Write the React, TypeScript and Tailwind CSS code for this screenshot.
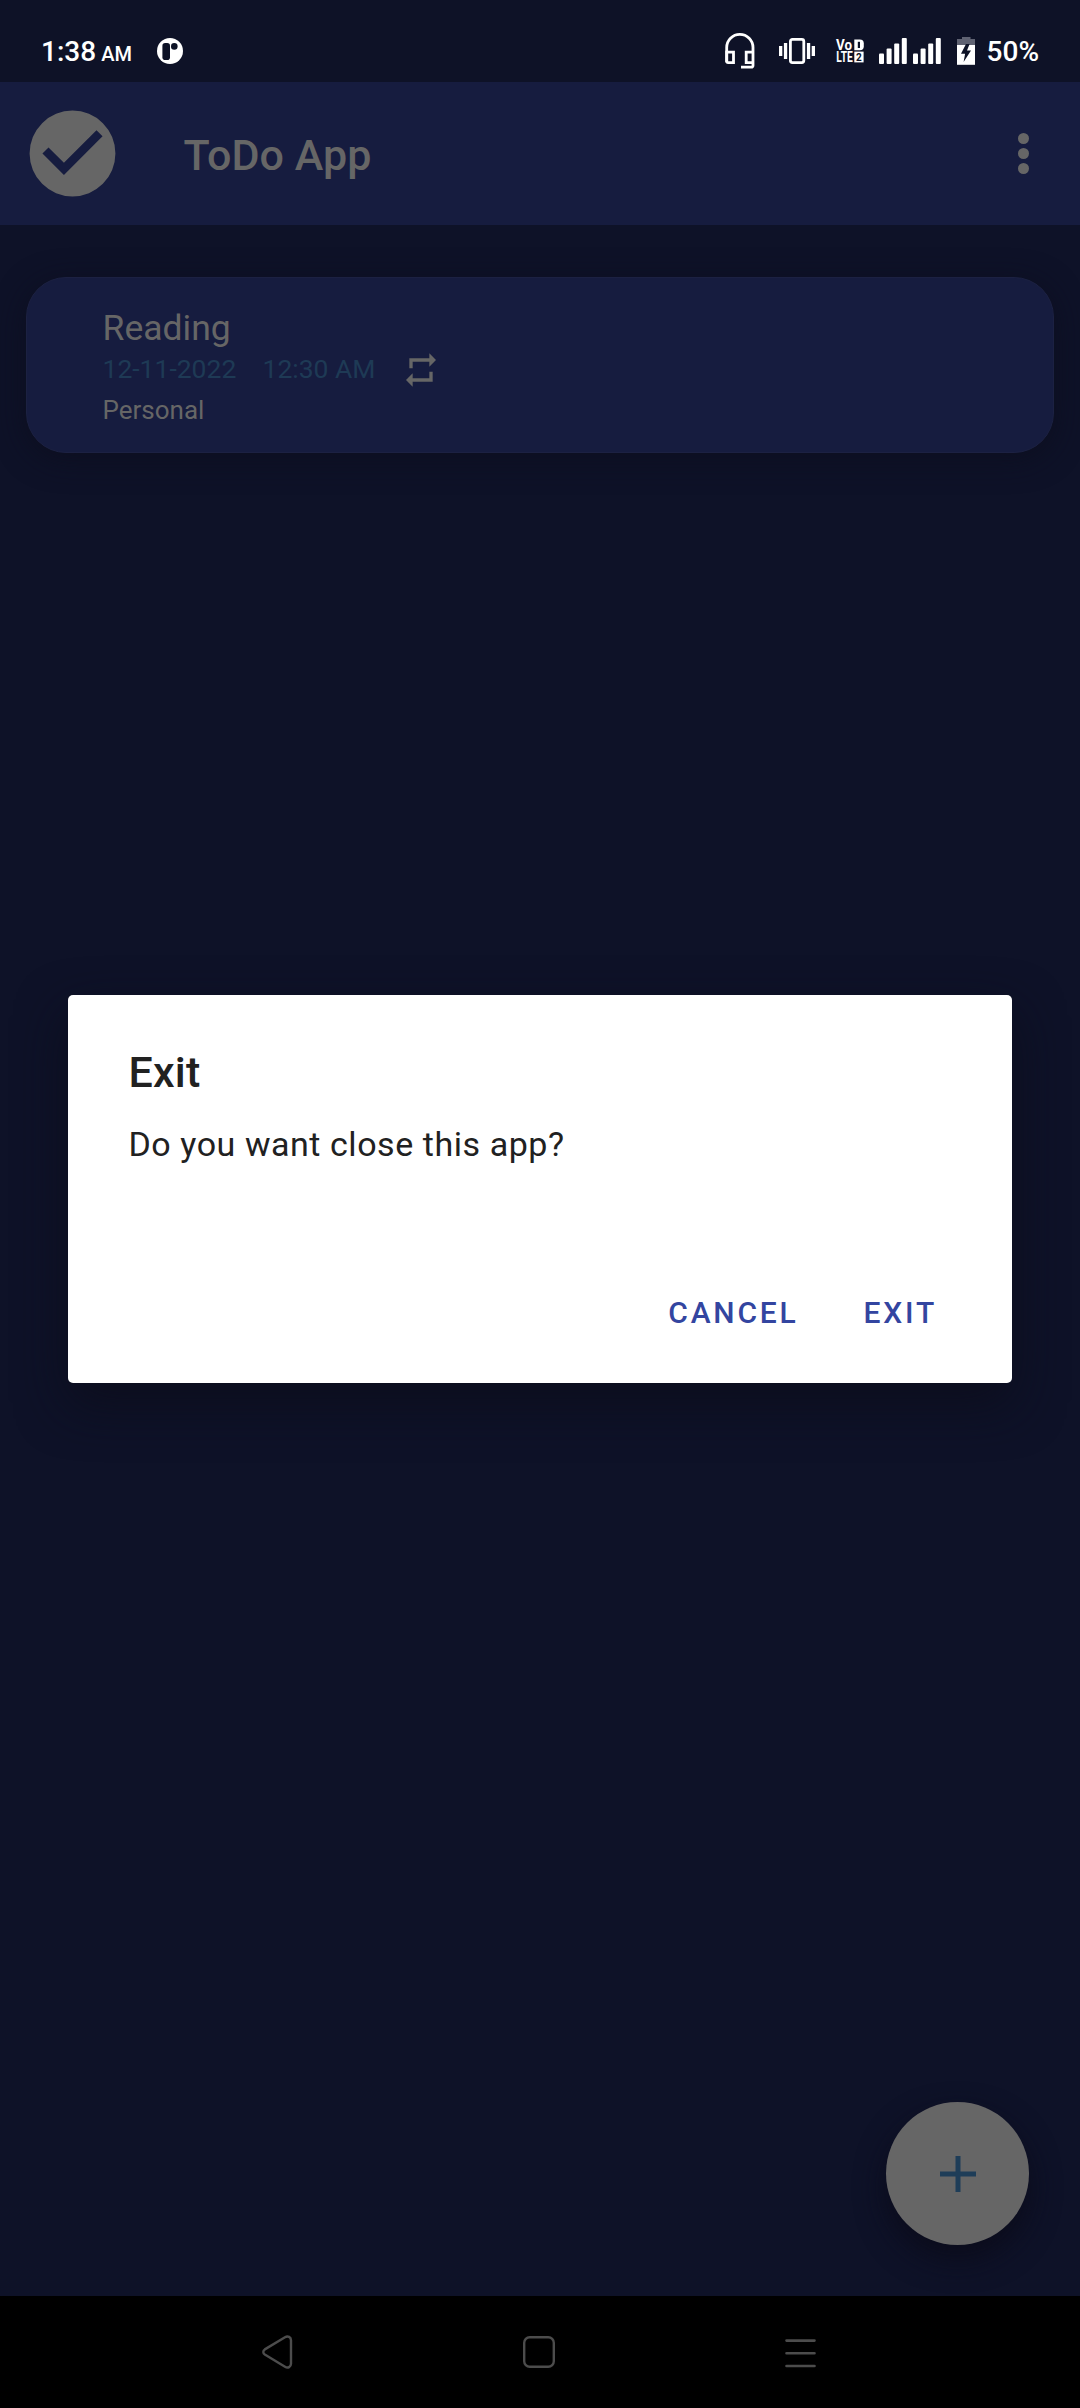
import type { ReactNode } from "react";

function AppNotificationIcon() {
  return (
    <svg className="ml-[25px] h-[26px] w-[26px]" viewBox="0 0 26 26">
      <circle cx="13" cy="13" r="13" fill="#fff" />
      <rect x="5.4" y="5" width="7.6" height="17" rx="2.8" fill="#0d1226" />
      <circle cx="17.3" cy="8.4" r="3.3" fill="#0d1226" />
    </svg>
  );
}

function HeadsetIcon() {
  return (
    <svg className="h-9 w-[30px]" viewBox="0 0 30 36" fill="none" stroke="#fff" strokeWidth="2.8">
      <path d="M1.7 29.2V14.6a13 13 0 0 1 26.3 0V32.6a1.6 1.6 0 0 1-1.6 1.6H16" />
      <path d="M1.7 19.2h6.8v10.4H3.2a1.5 1.5 0 0 1-1.5-1.5zM28 19.2h-6.8v10.4H28" />
    </svg>
  );
}

function VibrateIcon() {
  return (
    <svg className="ml-6 h-[26px] w-9" viewBox="0 0 36 26">
      <rect x="11.4" y="1.4" width="13.4" height="23.2" rx="2" fill="none" stroke="#fff" strokeWidth="2.8" />
      <path d="M0 8h3.3v10H0zM4.9 5h3.3v16H4.9zM27.9 5h3.3v16h-3.3zM32.7 8H36v10h-3.3z" fill="#fff" />
    </svg>
  );
}

function VolteIcon() {
  return (
    <svg
      className="ml-[21px] h-6 w-7 overflow-visible font-['Roboto',sans-serif] font-bold"
      viewBox="0 0 28 24"
      fill="#fff"
    >
      <text x="0" y="11.2" fontSize="15" textLength="16" lengthAdjust="spacingAndGlyphs">Vo</text>
      <text x="0.3" y="23.4" fontSize="15" textLength="16.5" lengthAdjust="spacingAndGlyphs">LTE</text>
      <path d="M18.3.4h5.5a4 4 0 0 1 4 4v2.8a4 4 0 0 1-4 4h-5.5z" />
      <rect x="21.8" y="2.8" width="2.2" height="6.2" fill="#0d1226" />
      <rect x="18.3" y="12.6" width="9.3" height="10.8" />
      <text x="20" y="21.6" fontSize="10" fill="#0d1226">2</text>
    </svg>
  );
}

function SignalIcon({ className }: { className: string }) {
  return (
    <svg className={className} viewBox="0 0 28 26" fill="#fff">
      <rect x="0" y="15.4" width="5" height="10.6" rx="1" />
      <rect x="7.6" y="10.4" width="5" height="15.6" rx="1" />
      <rect x="15.2" y="5.4" width="5" height="20.6" rx="1" />
      <rect x="22.8" y="0" width="5" height="26" rx="1" />
    </svg>
  );
}

function BatteryIcon() {
  return (
    <svg className="ml-4 h-7 w-[18px]" viewBox="0 0 18 28">
      <path d="M5 0h8.5v2H18v6H0V2h5z" fill="#5f6272" />
      <path d="M0 8h18v19.8H0z" fill="#fff" />
      <path d="M9 7h3.6L10 13.4h4L6.6 25l1.500-8.200H4z" fill="#0d1226" />
    </svg>
  );
}

function StatusBar() {
  return (
    <div className="flex h-[82px] items-center justify-between bg-[#0e1227] px-[41px] pt-5 font-medium text-white">
      <div className="flex items-center">
        <div className="flex items-baseline gap-[5px] pt-0.5">
          <span className="text-[28px] leading-[34px]">1:38</span>
          <span className="text-[20px]">AM</span>
        </div>
        <AppNotificationIcon />
      </div>
      <div className="flex items-center">
        <HeadsetIcon />
        <VibrateIcon />
        <VolteIcon />
        <SignalIcon className="ml-[15px] h-[26px] w-7" />
        <SignalIcon className="ml-1.5 h-[26px] w-7" />
        <BatteryIcon />
        <span className="ml-3 pt-0.5 text-[28px] leading-[34px]">50%</span>
      </div>
    </div>
  );
}

function Header() {
  return (
    <header className="flex h-[143px] items-center bg-[#161c3f] pr-[51px] text-[#666]">
      <svg className="ml-[20.5px] h-[103px] w-[103px]" viewBox="0 0 24 24" fill="currentColor">
        <path d="M12 2a10 10 0 1 0 0 20 10 10 0 0 0 0-20zm-2 15l-5-5 1.410-1.410L10 14.170l7.590-7.590L19 8z" />
      </svg>
      <h1 className="ml-[60px] flex-1 pt-0.5 text-[43px] leading-[52px] font-medium tracking-[0.1px]">ToDo App</h1>
      <div className="flex flex-col gap-[4.5px]">
        <span className="h-[10.7px] w-[10.7px] rounded-full bg-[#666]" />
        <span className="h-[10.7px] w-[10.7px] rounded-full bg-[#666]" />
        <span className="h-[10.7px] w-[10.7px] rounded-full bg-[#666]" />
      </div>
    </header>
  );
}

function TaskCard() {
  return (
    <article className="mx-[26px] mt-[52px] h-[176px] rounded-[40px] border border-[#1c2142] bg-[#161c3f] pt-[29px] pl-[75.5px] text-[#666] shadow-[0_6px_30px_rgba(12,14,30,0.8)]">
      <h2 className="text-[35.5px] leading-[42px]">Reading</h2>
      <div className="flex h-[42px] items-center text-[26.5px] leading-[40px] text-[#1e3a55]">
        <span className="-mt-0.5 w-40">12-11-2022</span>
        <span className="-mt-0.5 w-[138.5px]">12:30 AM</span>
        <svg className="h-[40px] w-[40px]" viewBox="0 0 24 24" fill="#666">
          <path d="M7 7h10v3l4-4-4-4v3H5v6h2V7zm10 10H7v-3l-4 4 4 4v-3h12v-6h-2v4z" />
        </svg>
      </div>
      <p className="-mt-0.5 text-[26px] leading-[42px]">Personal</p>
    </article>
  );
}

function DialogButton({ children }: { children: ReactNode }) {
  return (
    <button className="text-[30px] leading-[40px] font-medium tracking-[2.8px] text-[#3345a0]">{children}</button>
  );
}

function ExitDialog() {
  return (
    <div className="absolute inset-0 flex flex-col px-[68px] pt-[995px]">
      <section
        role="dialog"
        className="h-[388px] rounded-[5px] bg-white pt-[51px] pl-[60.5px] text-[#212121] shadow-[0_20px_50px_rgba(12,13,28,0.9)]"
      >
        <h2 className="text-[43px] leading-[52px] font-medium tracking-[0.2px]">Exit</h2>
        <p className="mt-[26px] text-[34px] leading-[40px] tracking-[0.55px]">Do you want close this app?</p>
        <div className="mt-[129px] flex justify-end gap-[65px] pr-[75px]">
          <DialogButton>CANCEL</DialogButton>
          <DialogButton>EXIT</DialogButton>
        </div>
      </section>
    </div>
  );
}

function AddButton() {
  return (
    <button className="mt-auto mr-[51px] mb-[51px] flex h-[143px] w-[143px] items-center justify-center self-end rounded-full bg-[#666] shadow-[0_14px_30px_rgba(10,11,25,0.85)]">
      <svg className="h-9 w-9" viewBox="0 0 36 36" stroke="#1e3d58" strokeWidth="5">
        <path d="M0 18h36M18 0v36" />
      </svg>
    </button>
  );
}

function NavigationBar() {
  return (
    <nav className="flex h-28 items-center justify-between bg-black pr-[264px] pl-[262px]">
      <svg className="h-[34px] w-8" viewBox="0 0 32 34" fill="none" stroke="#4c4c4c" strokeWidth="2.4">
        <path d="M2.8 14.4 23 2.2c3-1.8 6 0 6 3v23.6c0 3-3 4.8-6 3L2.8 19.6c-2-1.3-2-3.900 0-5.200z" />
      </svg>
      <svg className="h-8 w-8" viewBox="0 0 32 32" fill="none" stroke="#4c4c4c" strokeWidth="2.4">
        <rect x="1.2" y="1.2" width="29.6" height="29.6" rx="5.5" />
      </svg>
      <svg className="h-8 w-8" viewBox="0 0 32 32" stroke="#4c4c4c" strokeWidth="2.6" strokeLinecap="round">
        <path d="M2.500 4.600h28M2.500 17.300h28M2.500 30h28" />
      </svg>
    </nav>
  );
}

export default function App() {
  return (
    <div className="relative flex h-[2408px] w-[1080px] flex-col overflow-hidden bg-[#0e1228] font-['Roboto',sans-serif]">
      <StatusBar />
      <Header />
      <main className="flex flex-1 flex-col">
        <TaskCard />
        <AddButton />
      </main>
      <NavigationBar />
      <ExitDialog />
    </div>
  );
}
